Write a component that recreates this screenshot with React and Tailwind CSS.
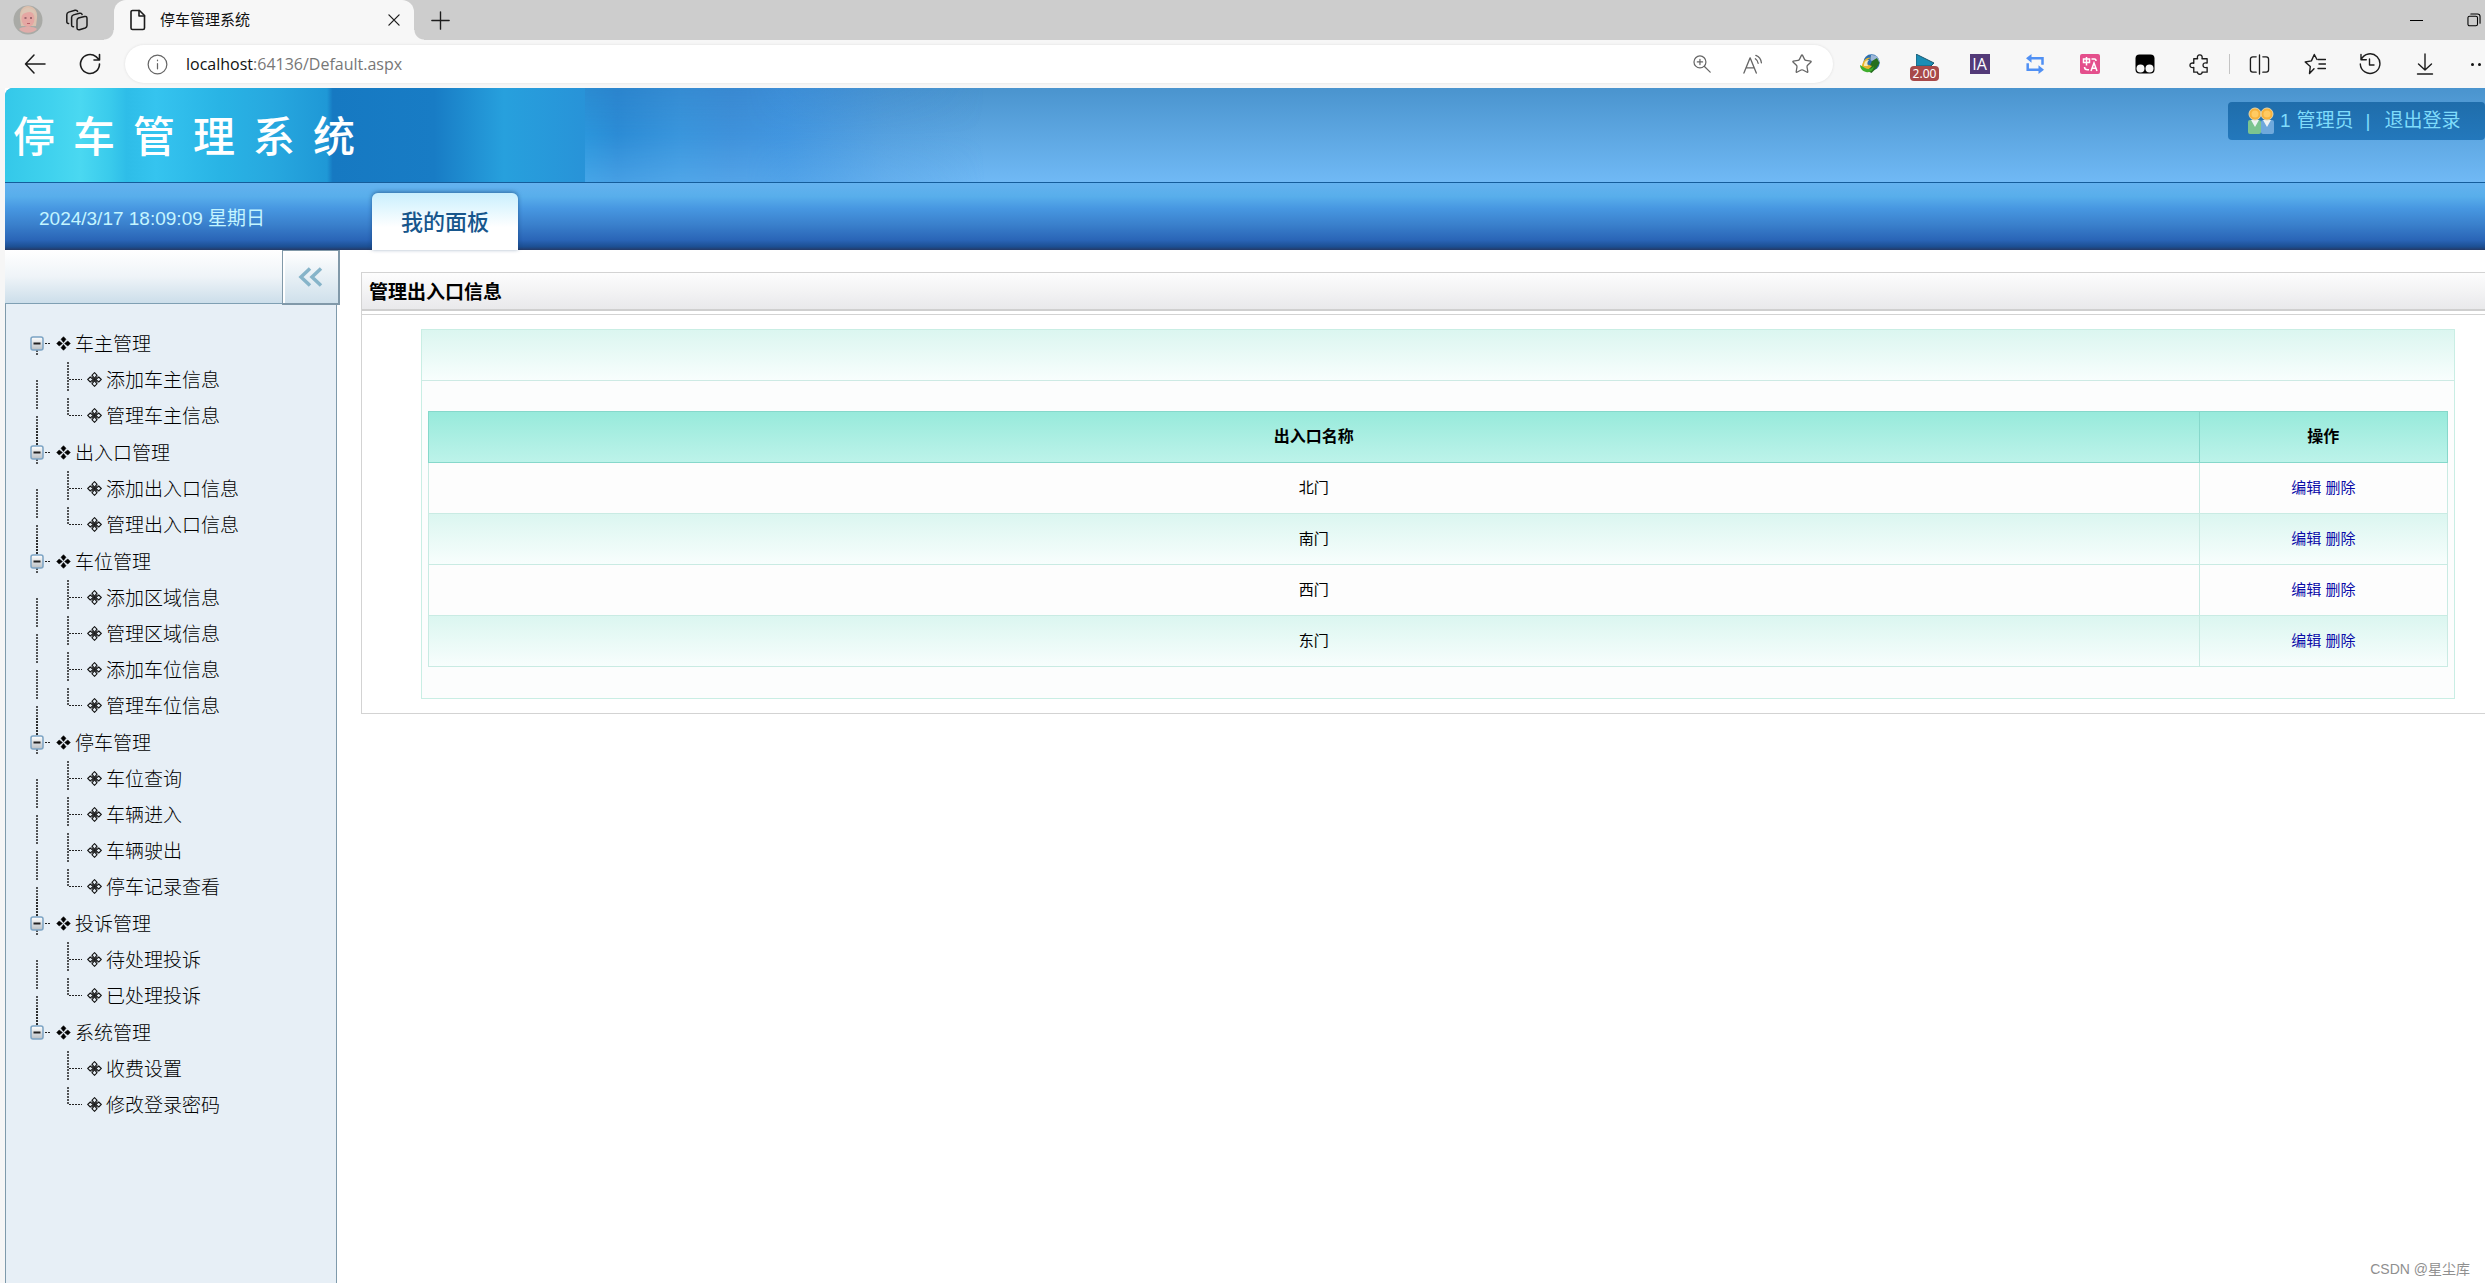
import React from "react";
import { Star } from "lucide-react";

const groups = [
  { title: "车主管理", items: ["添加车主信息", "管理车主信息"] },
  { title: "出入口管理", items: ["添加出入口信息", "管理出入口信息"] },
  { title: "车位管理", items: ["添加区域信息", "管理区域信息", "添加车位信息", "管理车位信息"] },
  { title: "停车管理", items: ["车位查询", "车辆进入", "车辆驶出", "停车记录查看"] },
  { title: "投诉管理", items: ["待处理投诉", "已处理投诉"] },
  { title: "系统管理", items: ["收费设置", "修改登录密码"] },
];

const gates = ["北门", "南门", "西门", "东门"];

function Line({ children, size = 22, className = "", color = "#1c1c1c", width = 1.4 }) {
  return (
    <svg
      width={size}
      height={size}
      viewBox="0 0 22 22"
      fill="none"
      stroke={color}
      strokeWidth={width}
      strokeLinecap="round"
      strokeLinejoin="round"
      className={className}
      aria-hidden="true"
    >
      {children}
    </svg>
  );
}

function ToolButton({ label, children }) {
  return (
    <button aria-label={label} className="flex h-full w-[55px] shrink-0 items-center justify-center">
      {children}
    </button>
  );
}

function TitleBar() {
  return (
    <div className="flex h-10 items-stretch bg-[#cdcdcd]">
      <button aria-label="个人资料" className="flex w-14 items-center justify-center">
        <svg width="30" height="30" viewBox="0 0 30 30" aria-hidden="true">
          <circle cx="15" cy="15" r="14.5" fill="#a9aaa6" />
          <path d="M7 14C6 5 10 1 15 1s10 4 9 12l-1 8H8z" fill="#dcc0ae" />
          <ellipse cx="15" cy="14" rx="6.500" ry="8" fill="#e5a7a3" />
          <path d="M8 11c0-6 4-8 7-8s8 2 8 8c-2-3-4-4-6-4-3 0-7 1-9 4z" fill="#dcc6b5" />
          <path d="M6 24c3-3 15-3 18 0-4 5-14 5-18 0z" fill="#e0aca9" />
          <path d="M11.500 13h2M17 13h2" stroke="#8a5560" strokeWidth="1.500" />
          <path d="M14 18.500h3" stroke="#b9606a" strokeWidth="1" />
        </svg>
      </button>
      <button aria-label="工作区" className="flex w-[42px] items-center justify-center">
        <Line size={22} width={1.500}>
          <path d="M12.500 9l6-1.500c1.500-.4 2.500.3 2.500 2v7c0 1.200-.7 2.100-1.800 2.500l-5.700 1.700c-1.500.4-2.500-.3-2.500-2v-7.200c0-1.200.5-2.100 1.500-2.500z" />
          <path d="M7.500 17.800c-1.300.1-1.900-.6-1.900-2V8.500c0-1.300.6-2.200 1.900-2.600l6-1.600c1.400-.4 2.300.1 2.600 1.200" />
          <path d="M2.600 14.500C1.400 14.600.8 13.900.8 12.600V5.700c0-1.300.6-2.200 1.900-2.600L9 1.300c1.400-.3 2.200.1 2.600 1.100" />
        </Line>
      </button>
      <div className="relative ml-4 flex w-[300px] items-center rounded-t-xl bg-[#f7f7f7] pl-[17px] pr-[11px]">
        <span className="absolute -left-2.5 bottom-0 size-2.5 bg-[radial-gradient(circle_at_0_0,#cdcdcd_9px,#f7f7f7_10px)]" />
        <span className="absolute -right-2.5 bottom-0 size-2.5 bg-[radial-gradient(circle_at_100%_0,#cdcdcd_9px,#f7f7f7_10px)]" />
        <Line size={22} width={1.600} className="-ml-1">
          <path d="M5.500 1.500h7l5 5V19a1.500 1.500 0 0 1-1.500 1.500H5.500A1.500 1.500 0 0 1 4 19V3a1.500 1.500 0 0 1 1.500-1.500z" />
          <path d="M12 1.500V7h5.500" />
        </Line>
        <span className="ml-[11px] flex-1 text-[15px] leading-5 text-[#111]">停车管理系统</span>
        <button aria-label="关闭标签页" className="p-0.5">
          <Line size={14} width={2}>
            <path d="M3 3l16 16M19 3L3 19" />
          </Line>
        </button>
      </div>
      <button aria-label="新建标签页" className="ml-[17px] flex items-center">
        <Line size={19} width={1.600}>
          <path d="M11 1v20M1 11h20" />
        </Line>
      </button>
      <div className="flex-1" />
      <button aria-label="最小化" className="flex w-[58px] items-center justify-center">
        <span className="h-px w-[13px] bg-black" />
      </button>
      <button aria-label="还原" className="flex w-10 items-center justify-end pr-1">
        <Line size={14} width={1.700} color="#000">
          <rect x="1.500" y="5" width="15" height="15" rx="2.500" />
          <path d="M6 1.500h10.500a4 4 0 0 1 4 4V16" />
        </Line>
      </button>
    </div>
  );
}

function Toolbar() {
  return (
    <div className="flex h-12 items-center bg-[#f7f7f7] pl-[7px]">
      <ToolButton label="后退">
        <Line width={1.500}>
          <path d="M21 11H1.500M10 2L1.500 11l8.500 9" />
        </Line>
      </ToolButton>
      <ToolButton label="刷新">
        <Line width={1.600}>
          <path d="M20.500 11A9.500 9.500 0 1 1 17 3.600l3 2.900M20.500 1.500v5.500H15" />
        </Line>
      </ToolButton>
      <div className="ml-2 flex h-[38px] flex-1 items-center rounded-full bg-white pl-[22px] pr-1.5 shadow-[0_0_3px_rgba(0,0,0,0.1)]">
        <Line size={21} color="#666" width={1.300}>
          <circle cx="11" cy="11" r="9.800" />
          <path d="M11 10v5.500M11 6.500v.5" />
        </Line>
        <div className="ml-[18px] flex-1 font-['Open_Sans','Noto_Sans',sans-serif] text-[16px] leading-6 text-[#777]">
          <span className="text-[#111]">localhost</span>:64136/Default.aspx
        </div>
        <button aria-label="缩放" className="flex w-[50px] justify-center">
          <Line size={18} color="#666" width={1.500}>
            <circle cx="8.500" cy="8.500" r="7.300" />
            <path d="M14 14l7 7M8.500 5.300v6.400M5.300 8.500h6.400" />
          </Line>
        </button>
        <button aria-label="朗读此页内容" className="flex w-[50px] justify-center">
          <Line size={21} color="#666" width={1.400}>
            <path d="M2 20L8.500 4 15 20M4.300 14.500h8.400" />
            <path d="M14 5c1.800 1.200 2.700 2.600 2.900 4.700M14.500 1.500c3.400 1.300 5.400 3.900 5.800 7.700" />
          </Line>
        </button>
        <button aria-label="收藏此页" className="flex w-[50px] justify-center">
          <Star size={22} color="#666" strokeWidth={1.400} />
        </button>
      </div>
      <div className="ml-[9px] flex h-full items-center">
        <ToolButton label="IDM">
          <svg width="20" height="20" viewBox="0 0 20 20" aria-hidden="true">
            <circle cx="11.500" cy="8.500" r="8.200" fill="#2d6fb0" />
            <path d="M11 1c5-.5 8.500 3 8.500 7l-5 1-4-3z" fill="#9db7d8" />
            <path d="M12 7l5-3 2.500 5-3 5-5 5-4-2z" fill="#246f1e" />
            <path d="M2 11c2-7 7-8 9-7-4 1-5 4-5 6l6 2-4 4C4 16 1 14 2 11z" fill="#e8b52c" />
            <path d="M0 11l5 3c3 2 7 1 9-2-1 5-4 7-8 6s-6-4-6-7z" fill="#3fae2d" />
            <path d="M4 12c0-4 2-6 5-6-2 2-2 4-1 6z" fill="#f7e9b5" />
          </svg>
        </ToolButton>
        <ToolButton label="视频速度 2.00">
          <span className="flex flex-col items-center pt-1.5">
            <svg width="18" height="12" viewBox="0 0 18 12" aria-hidden="true">
              <path d="M0 0l18 9-3 3H0z" fill="#1b8db5" stroke="#1a5870" strokeWidth="1" />
            </svg>
            <span className="rounded-sm bg-[#a84a4a] px-[3px] font-['Noto_Sans',sans-serif] text-[12px] leading-[15px] text-white">2.00</span>
          </span>
        </ToolButton>
        <ToolButton label="IA">
          <span className="flex size-5 items-center justify-center bg-[#533a78] font-['Open_Sans',sans-serif] text-[16px] leading-5 text-white">IA</span>
        </ToolButton>
        <ToolButton label="循环">
          <svg width="18" height="20" viewBox="0 0 18 20" fill="none" stroke="#5090f4" strokeWidth="2.500" aria-hidden="true">
            <path d="M4 4.300h12.500v6.500M14 15.700H1.700V9.200" />
            <path d="M5.500 0L0 4.300l5.500 4.400zM12.500 11.300l5.500 4.400-5.500 4.300z" fill="#5090f4" stroke="none" />
          </svg>
        </ToolButton>
        <ToolButton label="翻译">
          <svg width="20" height="20" viewBox="0 0 20 20" fill="none" stroke="#fff" strokeWidth="1.500" aria-hidden="true">
            <rect width="20" height="20" rx="2" fill="#e44f8c" stroke="none" />
            <path d="M3.500 5h6v3.500h-6zM6.500 3v8.500M11.500 5h3c1 0 1.500.5 1.500 2M4.500 13c0 2 .8 2.800 3 2.800h1.500M11 17l3-8 3 8M12 14.300h4" />
          </svg>
        </ToolButton>
        <ToolButton label="Tampermonkey">
          <svg width="20" height="20" viewBox="0 0 20 20" aria-hidden="true">
            <rect x=".5" y=".5" width="19" height="19" rx="4" fill="#000" />
            <circle cx="5.500" cy="14.500" r="4" fill="#f7f7f7" />
            <circle cx="14.500" cy="14.500" r="4" fill="#f7f7f7" />
          </svg>
        </ToolButton>
        <ToolButton label="扩展">
          <Line size={21}>
            <path d="M5 5h4c-.8-2.500.5-4 2.300-4s3.100 1.500 2.300 4H19v4.500c-3-.7-4.300.5-4.300 2.300s1.300 3 4.300 2.200V19h-5.400c.6 1-.8 2.200-2.300 2.200S8.500 20 9 19H5v-5c-2.400.8-4-.4-4-2.200S2.600 9 5 9.700z" />
          </Line>
        </ToolButton>
        <div className="flex w-[5px] justify-center">
          <span className="h-5 w-px bg-[#c4c4c4]" />
        </div>
        <ToolButton label="分屏">
          <Line size={21}>
            <path d="M7.500 3H4a2.500 2.500 0 0 0-2.500 2.500v11A2.500 2.500 0 0 0 4 19h3.500M14.500 3H18a2.500 2.500 0 0 1 2.500 2.500v11A2.500 2.500 0 0 1 18 19h-3.500M11 1v20" />
          </Line>
        </ToolButton>
        <ToolButton label="收藏夹">
          <Line size={22}>
            <path d="M14 6.500h7.500M15 11h6.500M14 15.500h7.500" />
            <path d="M10 15.700L5.500 20.500l.8-7L1.200 9l6.200-1.100L10.300 1.500 13 6.500" />
          </Line>
        </ToolButton>
        <ToolButton label="历史记录">
          <Line size={22}>
            <path d="M2.200 6.500A9.800 9.800 0 1 1 1.300 11M2 1.500v5.300h5.300M10.500 6v6H15" />
          </Line>
        </ToolButton>
        <ToolButton label="下载">
          <Line size={22}>
            <path d="M11 1v15.500M4.500 11l6.500 6 6.500-6M3.500 21h15" />
          </Line>
        </ToolButton>
        <button aria-label="设置及其他" className="flex h-full w-[33px] items-center justify-end gap-1 pr-1">
          <span className="size-[3px] rounded-full bg-[#111]" />
          <span className="size-[3px] rounded-full bg-[#111]" />
        </button>
      </div>
    </div>
  );
}

function Banner() {
  return (
    <header className="flex h-[94px] items-stretch overflow-hidden rounded-tl-lg bg-gradient-to-b from-[#4a94ce] to-[#70b9f5]">
      <div className="flex w-[580px] items-center bg-[linear-gradient(90deg,#34c8e9_0%,#40d2ee_8%,#4ad8f1_13%,#3acbec_18%,#2ebde8_21%,#35c4ef_26%,#29b4e5_37%,#27a8df_46%,#1f98d6_55.500%,#1679c2_56.500%,#187cc5_74%,#27a0dd_86%,#2893d8_100%)] pl-2 pt-1.5">
        <h1 className="flex gap-[18px] text-[42px] font-medium leading-[50px] text-white">
          {"停车管理系统".split("").map((c) => (
            <span key={c}>{c}</span>
          ))}
        </h1>
      </div>
      <div className="w-[400px] bg-[linear-gradient(90deg,#2b96dc_0%,#2c8cd6_8%,#3a96dd_24%,#3f92db_36%,#4296e0_50%,rgba(74,152,220,0.4)_75%,transparent_100%)]">
        <div className="h-full bg-[linear-gradient(180deg,rgba(40,110,180,0.25)_0%,transparent_50%,rgba(120,195,255,0.35)_100%)] [mask-image:linear-gradient(90deg,black_40%,transparent_100%)]" />
      </div>
      <div className="flex-1" />
      <div className="mt-3.5 flex h-[38px] w-[257px] items-center rounded bg-gradient-to-b from-[#1f6dab] to-[#2378bc] pl-5 text-[19px] leading-7 text-[#7fdcfb]">
        <svg width="26" height="28" viewBox="0 0 26 28" aria-hidden="true">
          <rect x="0" y="13" width="13" height="14" rx="2" fill="#7cc48f" />
          <rect x="13" y="13" width="13" height="14" rx="2" fill="#6fa9dc" />
          <path d="M3 13h8l-4 7zM15 13h8l-4 7z" fill="#eef3f4" />
          <circle cx="7" cy="7" r="6" fill="#f7b23c" stroke="#e9d6a6" />
          <circle cx="19" cy="7" r="6" fill="#f7b23c" stroke="#e9d6a6" />
          <circle cx="7" cy="7" r="3.500" fill="#ffca62" />
          <circle cx="19" cy="7" r="3.500" fill="#ffca62" />
        </svg>
        <span className="ml-1.5">1</span>
        <span className="ml-1.5">管理员</span>
        <span className="ml-3">|</span>
        <a href="#logout" className="ml-3.5">退出登录</a>
      </div>
    </header>
  );
}

function NavBar() {
  return (
    <nav className="flex h-[68px] items-end border-t border-[#155d9b] bg-[linear-gradient(180deg,#64b2ef_0%,#58aeeb_20%,#4797e1_38%,#3a80cc_62%,#2a65b7_85%,#1c4f93_95%,#243a66_100%)]">
      <div className="flex h-full w-[367px] items-center pl-[34px] pt-1 text-[19px] leading-6 text-[#c4f5ff]">
        <span>2024/3/17 18:09:09 星期日</span>
      </div>
      <a
        href="#panel"
        className="flex h-[57px] w-[146px] items-center justify-center rounded-t-md bg-gradient-to-b from-[#c9effd] to-white to-60% pt-0.5 text-[22px] font-medium leading-8 text-[#17568c] shadow-[0_-1px_4px_rgba(20,60,110,0.6)]"
      >
        我的面板
      </a>
    </nav>
  );
}

function Toggle({ first, last }) {
  return (
    <svg width="50" height="36" viewBox="0 0 50 36" fill="none" stroke="#222" className="shrink-0 overflow-visible" aria-hidden="true">
      <defs>
        <linearGradient id="toggleFill" x1="0" y1="0" x2="0" y2="1">
          <stop offset="0" stopColor="#fff" />
          <stop offset="1" stopColor="#b9bfc4" />
        </linearGradient>
      </defs>
      {!first && <path d="M31 -6v18" strokeDasharray="2 1" strokeWidth="1.500" />}
      {!last && <path d="M31 25v6" strokeDasharray="2 1" strokeWidth="1.500" />}
      <rect x="25" y="12" width="12" height="13" rx="2" fill="url(#toggleFill)" stroke="#7ba3c4" strokeWidth="1.500" />
      <path d="M27.500 18.500h7" strokeWidth="2" />
      <path d="M39 18.500h6" strokeDasharray="2 1" />
    </svg>
  );
}

function Branch({ lastItem, lastGroup }) {
  return (
    <svg width="81" height="36" viewBox="0 0 81 36" fill="none" stroke="#222" className="shrink-0 overflow-visible" aria-hidden="true">
      {!lastGroup && <path d="M31 19v30" strokeDasharray="2 1" strokeWidth="1.500" />}
      <path d={lastItem ? "M62 1v17" : "M62 1v30"} strokeDasharray="2 1" strokeWidth="1.500" />
      <path d="M63 18.500h13" strokeDasharray="2 1" />
    </svg>
  );
}

function Diamond({ open }) {
  return (
    <svg width="15" height="15" viewBox="0 0 15 15" fill={open ? "none" : "#000"} stroke="#111" strokeWidth={open ? 1.100 : 0.600} className="shrink-0" aria-hidden="true">
      <path d="M7.500.7L10 3.200 7.500 6.400 5 3.200zM7.500 14.300L10 11.800 7.500 8.600 5 11.800zM.7 7.500L3.200 5l3.200 2.500L3.200 10zM14.300 7.500L11.800 5 8.600 7.500l3.200 2.500z" />
      {open && <path d="M4.500 4.500l6 6M10.500 4.500l-6 6" strokeWidth="0.800" />}
    </svg>
  );
}

function Sidebar() {
  return (
    <aside className="flex w-[335px] shrink-0 flex-col">
      <div className="relative z-10 flex h-[54px] items-start justify-end border-b border-[#7f9fb3] bg-gradient-to-b from-white via-[#eff4f8] to-[#ccdeea]">
        <button
          aria-label="收起菜单"
          className="flex h-[55px] w-[58px] shrink-0 items-center justify-center border border-r-2 border-b-2 border-[#8199a9] bg-gradient-to-b from-white to-[#cfe0eb] shadow-[inset_2px_1px_0_white]"
        >
          <svg width="25" height="20" viewBox="0 0 25 20" fill="none" stroke="#86b4c9" strokeWidth="3.500" aria-hidden="true">
            <path d="M12 1.500L3 10l9 8.500M23 1.500L14 10l9 8.500" />
          </svg>
        </button>
      </div>
      <div className="mr-[3px] flex-1 border-x border-[#7f9aab] bg-[#e7eff6] pt-[21px]">
        <ul className="text-[19px] font-light leading-7 text-black">
          {groups.map((g, gi) => (
            <li key={g.title} className="pb-px">
              <div className="flex h-9 items-center">
                <Toggle first={gi === 0} last={gi === groups.length - 1} />
                <Diamond />
                <a href="#group" className="ml-1 pt-[3px]">{g.title}</a>
              </div>
              <ul>
                {g.items.map((item, i) => (
                  <li key={item} className="flex h-9 items-center">
                    <Branch lastItem={i === g.items.length - 1} lastGroup={gi === groups.length - 1} />
                    <Diamond open />
                    <a href="#item" className="ml-1 pt-[3px]">{item}</a>
                  </li>
                ))}
              </ul>
            </li>
          ))}
        </ul>
      </div>
    </aside>
  );
}

function Panel() {
  return (
    <main className="min-w-0 flex-1 pl-[21px] pt-[22px]">
      <section className="border-b border-l border-t border-[#d3d3d3]">
        <h2 className="flex h-[38px] items-center border-b-2 border-[#cfcfcf] bg-gradient-to-b from-[#fdfdfd] to-[#e9e9eb] pl-[7px] pt-1 text-[19px] font-bold leading-7 text-black">
          管理出入口信息
        </h2>
        <div className="mt-[3px] border-t border-[#d3d3d3] pb-3.5 pl-[59px] pr-[30px] pt-3.5">
          <div className="border border-[#c9eee4] bg-[#fcfdfd]">
            <div className="h-[51px] border-b border-[#cdeae4] bg-gradient-to-b from-[#dbf6f0] to-[#f8fefd]" />
            <div className="px-1.5 pb-[31px] pt-[30px]">
              <table className="w-full border-collapse text-center text-[15px] leading-5 text-black">
                <thead>
                  <tr className="h-[51px] bg-gradient-to-b from-[#97eadb] to-[#bdf3ea]">
                    <th className="border border-[#86d8cb] text-[16px] font-bold">出入口名称</th>
                    <th className="w-[12.3%] border border-[#86d8cb] text-[16px] font-bold">操作</th>
                  </tr>
                </thead>
                <tbody>
                  {gates.map((gate) => (
                    <tr key={gate} className="h-[51px] bg-[#fdfdfd] even:bg-gradient-to-b even:from-[#dbf6f0] even:to-[#f8fefd]">
                      <td className="border border-[#c9ebe3]">{gate}</td>
                      <td className="border border-[#c9ebe3] text-[#0a0aa8]">
                        <a href="#edit">编辑</a> <a href="#delete">删除</a>
                      </td>
                    </tr>
                  ))}
                </tbody>
              </table>
            </div>
          </div>
        </div>
      </section>
    </main>
  );
}

export default function App() {
  return (
    <div className="relative flex min-h-screen flex-col overflow-hidden bg-white font-['Liberation_Sans','Noto_Sans_CJK_SC',sans-serif]" lang="zh-CN">
      <TitleBar />
      <Toolbar />
      <div className="flex flex-1 flex-col border-l-[5px] border-[#f6f6f6]">
        <Banner />
        <NavBar />
        <div className="flex flex-1">
          <Sidebar />
          <Panel />
        </div>
      </div>
      <div className="absolute bottom-1 right-[15px] text-[14px] leading-5 text-[#8f8f8f]">CSDN @星尘库</div>
    </div>
  );
}
